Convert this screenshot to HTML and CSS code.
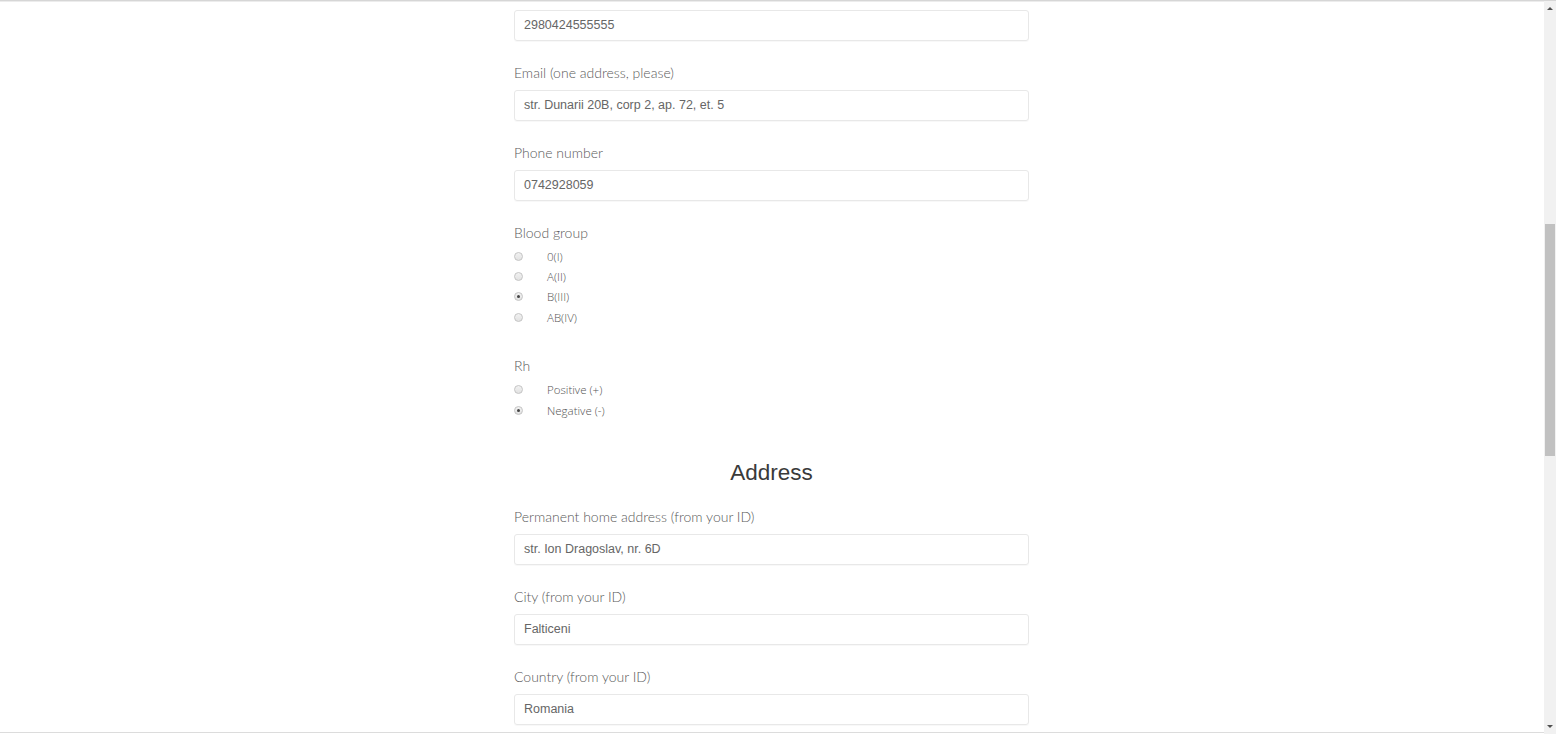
FILE: index.html
```html
<!DOCTYPE html>
<html lang="en">
<head>
<meta charset="utf-8">
<title>Form</title>
<link rel="stylesheet" href="styles.css">
</head>
<body>
<div class="topline"></div>
<main class="page">
  <form class="form">
    <div class="field first">
      <div class="input">2980424555555</div>
    </div>
    <div class="field">
      <label class="label">Email (one address, please)</label>
      <div class="input">str. Dunarii 20B, corp 2, ap. 72, et. 5</div>
    </div>
    <div class="field">
      <label class="label">Phone number</label>
      <div class="input">0742928059</div>
    </div>
    <div class="field radios">
      <label class="label">Blood group</label>
      <div class="radio"><span class="dot"></span><span class="rtext">0(I)</span></div>
      <div class="radio"><span class="dot"></span><span class="rtext">A(II)</span></div>
      <div class="radio"><span class="dot on"></span><span class="rtext">B(III)</span></div>
      <div class="radio"><span class="dot"></span><span class="rtext">AB(IV)</span></div>
    </div>
    <div class="field radios rh">
      <label class="label">Rh</label>
      <div class="radio"><span class="dot"></span><span class="rtext">Positive (+)</span></div>
      <div class="radio"><span class="dot on"></span><span class="rtext">Negative (-)</span></div>
    </div>
    <h2 class="heading">Address</h2>
    <div class="field">
      <label class="label">Permanent home address (from your ID)</label>
      <div class="input">str. Ion Dragoslav, nr. 6D</div>
    </div>
    <div class="field">
      <label class="label">City (from your ID)</label>
      <div class="input">Falticeni</div>
    </div>
    <div class="field">
      <label class="label">Country (from your ID)</label>
      <div class="input">Romania</div>
    </div>
  </form>
</main>
<div class="bottomline"></div>
<div class="scrollbar">
  <span class="arrow up"></span>
  <span class="thumb"></span>
  <span class="arrow down"></span>
</div>
</body>
</html>
```

FILE: styles.css
```css
html, body {
  margin: 0;
  padding: 0;
  background: #fff;
  overflow: hidden;
}
body {
  font-family: "Lato", "Open Sans", sans-serif;
  color: #555;
}
.topline {
  height: 1px;
  background: #d6d6d6;
  box-shadow: 0 1px 0 #ececec;
}
.page {
  width: 1543px;
  display: flex;
  justify-content: center;
}
.form {
  width: 515px;
  padding-top: 9px;
  display: flex;
  flex-direction: column;
}
.field {
  display: flex;
  flex-direction: column;
  margin-bottom: 23px;
}
.label {
  height: 18px;
  line-height: 18px;
  font-size: 14px;
  font-weight: 300;
  color: #5a5a5a;
  margin-bottom: 8px;
}
.input {
  box-sizing: border-box;
  height: 31px;
  border: 1px solid #e8e8e8;
  border-radius: 3px;
  box-shadow: 0 1px 1px rgba(0,0,0,0.03);
  padding: 0 9px;
  line-height: 29px;
  font-family: "Liberation Sans", Arial, sans-serif;
  font-size: 12.5px;
  color: #666;
}
.radios .label {
  margin-bottom: 4px;
}
.rh .label {
  margin-bottom: 5px;
}
.radios {
  margin-bottom: 29px;
}
.radio {
  height: 20.4px;
  display: flex;
  align-items: center;
}
.dot {
  box-sizing: border-box;
  width: 9px;
  height: 9px;
  border-radius: 50%;
  border: 1px solid #c4c4c4;
  background: linear-gradient(#f2f2f2, #e2e2e2);
  margin-left: 0;
  margin-right: 24px;
  position: relative;
}
.dot.on::after {
  content: "";
  position: absolute;
  left: 2px;
  top: 2px;
  width: 3px;
  height: 3px;
  border-radius: 50%;
  background: #444;
}
.rtext {
  font-family: "Open Sans", sans-serif;
  font-size: 11.5px;
  font-weight: 300;
  color: #555;
}
.rh {
  margin-bottom: 38px;
}
.heading {
  margin: 0 0 20px;
  height: 30px;
  line-height: 30px;
  text-align: center;
  font-family: "Liberation Sans", Arial, sans-serif;
  font-weight: normal;
  font-size: 22.5px;
  color: #3a3a3a;
}
.bottomline {
  position: fixed;
  left: 0;
  top: 732px;
  width: 1544px;
  height: 1px;
  background: #dcdcdc;
}
.scrollbar {
  position: fixed;
  top: 1px;
  right: 0;
  width: 12px;
  height: 733px;
  background: #f1f1f1;
}
.thumb {
  position: absolute;
  left: 1px;
  right: 1px;
  top: 223px;
  height: 232px;
  background: #c1c1c1;
}
.arrow {
  position: absolute;
  left: 3px;
  width: 0;
  height: 0;
  border-left: 3px solid transparent;
  border-right: 3px solid transparent;
}
.arrow.up {
  top: 6px;
  border-bottom: 3px solid #505050;
}
.arrow.down {
  bottom: 6px;
  border-top: 3px solid #505050;
}
```
